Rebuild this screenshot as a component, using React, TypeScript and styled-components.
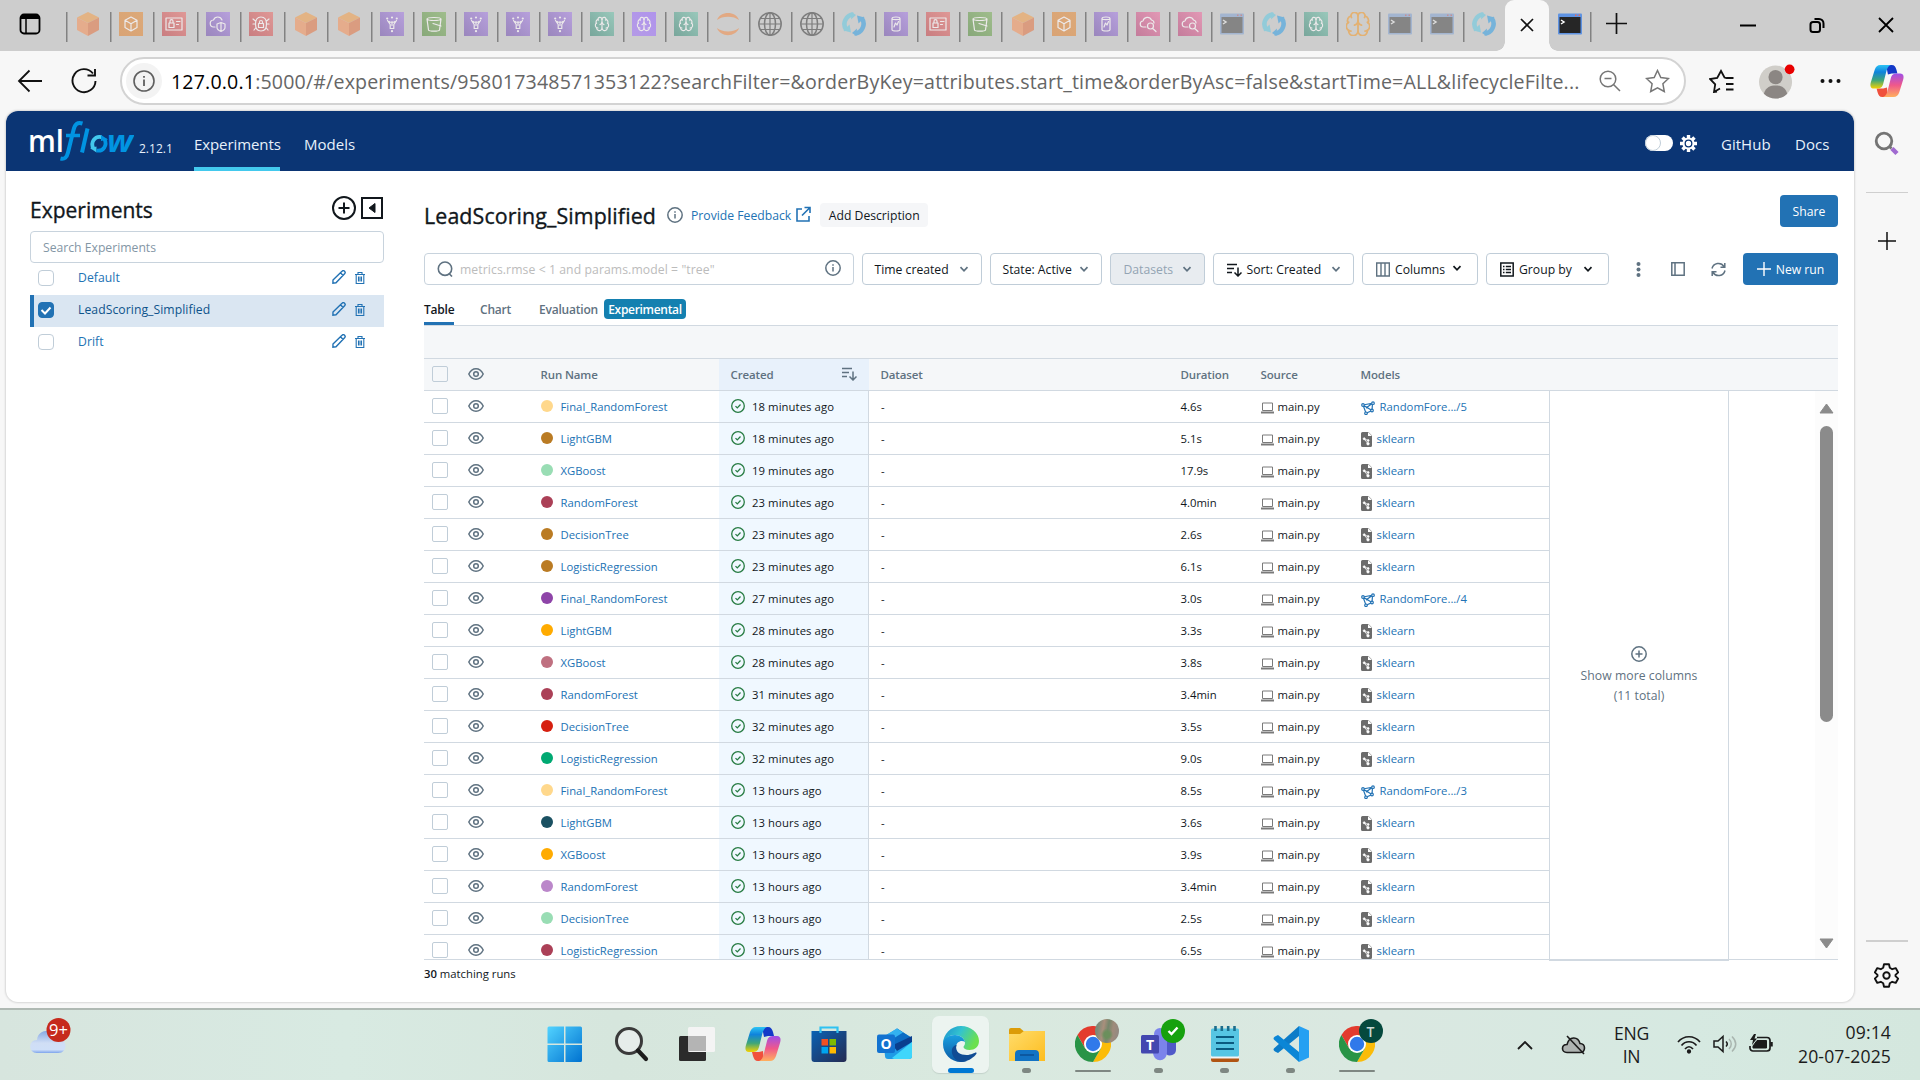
import React from "react";
import styled, { createGlobalStyle, css } from "styled-components";
import { Brain as BrainGlyph } from "lucide-react";

const Global = createGlobalStyle`
  *, *::before, *::after { box-sizing: border-box; }
  html, body { margin: 0; padding: 0; overflow: hidden; }
  body { font-family: "Open Sans", "Noto Sans", sans-serif; font-size: 12.2px; color: #11171c; }
`;

const LINE = "#d1d9e1";
const BLUE = "#2272b4";
const GREY = "#5f7281";

/* ---------- shell ---------- */
const Screen = styled.div`
  width: 1920px; height: 1080px; display: flex; flex-direction: column; overflow: hidden; background: #f7f7f7;
`;
const TabStrip = styled.div`
  height: 51px; flex: none; background: #cdcdcd; display: flex; align-items: stretch;
`;
const TabMenu = styled.div`
  width: 66px; display: flex; align-items: center; padding-left: 19px; padding-bottom: 3px;
`;
const BrowserTab = styled.div<{ $w: number; $line?: boolean }>`
  width: ${(p) => p.$w}px; flex: none; display: flex; align-items: flex-start; padding: 12px 0 0 9px;
  background: ${(p) => (p.$line === false ? "none" : "linear-gradient(#828282,#828282) 0 12px / 1.5px 30px no-repeat")};
`;
const ActiveTab = styled.div`
  width: 44px; flex: none; background: #f7f7f7; border-radius: 9px 9px 0 0; display: flex; justify-content: center; padding-top: 18px;
  position: relative;
  &::before, &::after { content: ""; position: absolute; bottom: 0; width: 9px; height: 9px; }
  &::before { left: -9px; background: radial-gradient(circle at 0 0, transparent 8.5px, #f7f7f7 9px); }
  &::after { right: -9px; background: radial-gradient(circle at 100% 0, transparent 8.5px, #f7f7f7 9px); }
`;
const WindowButtons = styled.div`
  margin-left: auto; display: flex; gap: 53px; padding: 17px 26px 0 0;
`;
const Toolbar = styled.div`
  height: 60px; flex: none; display: flex; align-items: center; background: #f7f7f7; padding-left: 17px;
`;
const ReloadWrap = styled.div`margin-left: 28px;`;
const UrlBar = styled.div`
  width: 1566px; height: 48px; margin-left: 23px; border: 2px solid #d3d3d3; border-radius: 24px; background: #fff;
  display: flex; align-items: center; padding: 0 14px 0 4px; flex: none;
`;
const SiteInfo = styled.div`
  width: 36px; height: 36px; border-radius: 50%; background: #f3f3f3; display: flex; align-items: center; justify-content: center;
`;
const Url = styled.div`
  margin-left: 9px; font-size: 19.6px; color: #666; white-space: nowrap; width: 1411px; letter-spacing: 0.165px; flex: none;
  b { font-weight: 400; color: #000; }
`;
const UrlActions = styled.div`margin-left: auto; display: flex; align-items: center; gap: 24px;`;
const ToolbarActions = styled.div`display: flex; align-items: center; padding-left: 23px;`;
const Avatar = styled.div`margin-left: 24px; width: 36px; height: 42px; display: flex; align-items: center;`;
const More = styled.div`margin-left: 25px; display: flex;`;
const Copilot = styled.div`margin-left: 29px; display: flex;`;

const Body = styled.div`flex: 1; display: flex; min-height: 0;`;
const Card = styled.div`
  width: 1848px; height: 891px; margin-left: 6px; flex: none; background: #fff; border-radius: 12px; overflow: hidden;
  box-shadow: 0 0 2px 1px rgba(0,0,0,0.13); display: flex; flex-direction: column;
`;
const EdgeBar = styled.div`
  flex: 1; display: flex; flex-direction: column; align-items: center; padding: 20px 1px 20px 0;
`;
const EdgeLine = styled.div<{ $mt: number }>`width: 42px; height: 1px; background: #cfcfcf; margin-top: ${(p) => p.$mt}px; margin-bottom: 39px;`;
const EdgeBottom = styled.div`
  margin-top: auto; width: 42px; border-top: 2px solid #cfcfcf; padding-top: 21px; display: flex; justify-content: center;
`;

/* ---------- mlflow header ---------- */
const Header = styled.div`
  height: 60px; flex: none; background: #0b3574; display: flex; align-items: stretch; color: #e7f1fb; font-size: 15px; padding: 0 24px 0 20px;
`;
const Version = styled.span`margin: 30px 0 0 5px; width: 31px; font-size: 12px; line-height: 16px; white-space: nowrap;`;
const NavLink = styled.a<{ $active?: boolean; $w: number }>`
  width: ${(p) => p.$w}px; margin-left: 24px; padding-top: 22px; line-height: 22px; white-space: nowrap;
  letter-spacing: ${(p) => (p.$active ? -0.08 : 0.02)}px;
  border-bottom: 4px solid ${(p) => (p.$active ? "#43c9ed" : "transparent")};
`;
const HeaderRight = styled.div`margin-left: auto; display: flex; align-items: stretch;`;
const Switch = styled.div`
  width: 28px; height: 16px; margin-top: 24px; border-radius: 8px; background: #fff; display: flex;
  &::before { content: ""; width: 16px; height: 16px; border-radius: 50%; border: 1px solid #c0cdd8; }
`;
const SunWrap = styled.div`margin: 24px 0 0 7px; height: 17px;`;

/* ---------- sidebar ---------- */
const Content = styled.div`flex: 1; display: flex; min-height: 0;`;
const Sidebar = styled.div`width: 378px; flex: none; padding: 25px 0 0 24px; display: flex; flex-direction: column;`;
const SideHead = styled.div`
  height: 35px; display: flex; gap: 5px; align-items: flex-start; padding-right: 1px;
  h1 { margin: -1px auto 0 0; font-size: 21px; line-height: 30px; font-weight: 500; -webkit-text-stroke: .35px #11171c; letter-spacing: 0; }
`;
const SearchExp = styled.div`
  height: 32px; border: 1px solid #c8d3dd; border-radius: 4px; color: #8396a5; padding: 0 12px; line-height: 31px;
`;
const ExpRow = styled.div<{ $on?: boolean }>`
  height: 32px; display: flex; align-items: center; padding-right: 19px; padding-bottom: 2px; letter-spacing: .06px; color: ${(p) => (p.$on ? "#0e538b" : BLUE)};
  ${(p) => (p.$on ? css`background: #dae6f2; border-left: 4px solid ${BLUE}; padding-left: 4px;` : css`padding-left: 8px;`)}
  span { margin: -1px auto 0 24px; }
  > svg { margin-top: -3px; }
  > svg + svg { margin: 0 0 0 9px; }
`;
const Box = styled.i<{ $on?: boolean; $sharp?: boolean }>`
  width: 16px; height: 16px; flex: none; border-radius: ${(p) => (p.$sharp ? 2 : 4)}px;
  border: 1px solid ${(p) => (p.$on ? BLUE : "#c0cdd8")}; background: ${(p) => (p.$on ? BLUE : "transparent")};
  display: flex; align-items: center; justify-content: center;
`;

/* ---------- main ---------- */
const Main = styled.div`width: 1414px; margin-left: 40px; display: flex; flex-direction: column;`;
const TitleRow = styled.div`
  height: 82px; padding-top: 24px; display: flex; align-items: flex-start;
  h2 { margin: 0; width: 231px; font-size: 21.4px; line-height: 42px; font-weight: 500; -webkit-text-stroke: .35px #11171c; white-space: nowrap; letter-spacing: 0.1px; }
`;
const InfoSlot = styled.span`margin: 12px 0 0 12px; height: 16px;`;
const Feedback = styled.a`margin: 12px 0 0 8px; color: ${BLUE}; display: flex; gap: 5px; line-height: 18px; font-size: 12.2px; white-space: nowrap; svg { margin-top: -1px; }`;
const AddDesc = styled.span`margin: 8px 0 0 9px; width: 108px; height: 24px; border-radius: 4px; background: #f5f6f8; line-height: 25px; text-align: center; white-space: nowrap;`;
const Primary = styled.button<{ $w: number }>`
  width: ${(p) => p.$w}px; height: 32px; border: 0; border-radius: 4px; background: ${BLUE}; color: #fff; font: inherit; font-weight: 500;
  display: flex; align-items: center; justify-content: center; gap: 5px; padding: 0; white-space: nowrap;
`;
const Push = styled.div`margin-left: auto;`;
const Filters = styled.div`height: 32px; display: flex; gap: 8px;`;
const RunSearch = styled.div`
  width: 430px; border: 1px solid #c8d3dd; border-radius: 4px; display: flex; align-items: center; padding: 0 12px; color: #bcbcbc;
  span { margin: 0 auto 0 7px; letter-spacing: .09px; }
  span + svg { margin-top: -2px; }
`;
const Select = styled.div<{ $w: number; $off?: boolean; $pl?: number }>`
  width: ${(p) => p.$w}px; height: 32px; border: 1px solid #c0cdd8; border-radius: 4px; display: flex; align-items: center;
  justify-content: space-between; padding: 0 12px 0 ${(p) => p.$pl ?? 11.5}px; white-space: nowrap;
  background: ${(p) => (p.$off ? "#e8ecf0" : "#fff")}; color: ${(p) => (p.$off ? "#93a4b3" : "#11171c")};
  span { display: flex; align-items: center; gap: 5px; margin-top: 1px; }
`;
const ColumnsSelect = styled(Select)`padding-right: 15px; > svg { margin-top: -1px; }`;
const GroupSelect = styled(Select)`padding-right: 15px;`;
const KebabSlot = styled.div`margin-left: auto; display: flex; align-items: center; padding-right: 22px;`;
const Tools = styled.div`display: flex; align-items: center; gap: 26px; padding-right: 9px;`;
const TabRow = styled.div`
  margin-top: 8px; height: 33px; border-bottom: 1px solid ${LINE}; display: flex; font-weight: 600; color: ${GREY}; font-size: 12px;
`;
const ViewTab = styled.div<{ $on?: boolean; $w: number }>`
  width: ${(p) => p.$w}px; margin-right: 26px; height: 32px; line-height: 33px; white-space: nowrap; letter-spacing: -.2px;
  color: ${(p) => (p.$on ? "#11171c" : GREY)}; border-bottom: 3px solid ${(p) => (p.$on ? BLUE : "transparent")};
`;
const Badge = styled.span`
  margin: 6px 0 0 -22px; height: 20px; width: 82px; border-radius: 4px; background: #1480b0; color: #fff; line-height: 21px; text-align: center; letter-spacing: -.3px;
`;
const GroupHead = styled.div`height: 33px; flex: none; background: #f5f7f9; border-bottom: 1px solid ${LINE};`;
const rowGrid = css`display: grid; grid-template-columns: 44px 62px 189px 150px 301px 80px 100px 199px; width: 1125px;`;
const HeadWrap = styled.div`height: 32px; flex: none; background: #f5f7f9; border-bottom: 1px solid ${LINE};`;
const HeadRow = styled.div`${rowGrid} height: 31px; color: ${GREY}; font-weight: 600; font-size: 11.5px; letter-spacing: -.13px;`;
const TableBody = styled.div`height: 569px; flex: none; display: flex; border-bottom: 1px solid ${LINE};`;
const Rows = styled.div`height: 568px; overflow: hidden;`;
const Row = styled.div`${rowGrid} height: 32px; border-bottom: 1px solid ${LINE}; font-size: 11.3px;`;
const Cell = styled.div<{ $pl?: number; $tint?: string; $edge?: boolean; $gap?: number; $link?: boolean; $drop?: number; $ls?: number }>`
  display: flex; align-items: center; padding: 0 12px 1px ${(p) => p.$pl ?? 10.5}px; gap: ${(p) => p.$gap ?? 8}px; white-space: nowrap;
  background: ${(p) => p.$tint ?? "transparent"}; color: ${(p) => (p.$link ? BLUE : "inherit")};
  ${(p) => p.$ls !== undefined && css`letter-spacing: ${p.$ls}px;`}
  ${(p) => p.$edge && css`border-right: 1px solid ${LINE};`}
  > svg { margin-top: ${(p) => p.$drop ?? 0}px; }
`;
const Dot = styled.i<{ $c: string }>`width: 12px; height: 12px; border-radius: 50%; background: ${(p) => p.$c}; margin-top: -1px;`;
const MoreCols = styled.div`
  width: 180px; height: 570px; border: solid ${LINE}; border-width: 0 1px 1px; color: ${GREY}; display: flex; flex-direction: column; align-items: center;
  justify-content: center; font-size: 12.2px; line-height: 20px; text-align: center; letter-spacing: .05px;
  padding-top: 1px;
  svg { margin-bottom: 4px; margin-top: -1px; }
`;
const Scroll = styled.div`
  margin-left: auto; width: 23px; height: 568px; background: #fcfcfc; display: flex; flex-direction: column; align-items: center; padding: 12px 0 10px;
`;
const Thumb = styled.div`width: 13px; height: 296px; margin: 12px 0 auto; border-radius: 7px; background: #8b8b8b;`;
const Footer = styled.div`padding-top: 5px; line-height: 18px; font-size: 11.3px; b { font-weight: 600; }`;

/* ---------- taskbar ---------- */
const Taskbar = styled.div`
  height: 72px; flex: none; border-top: 2px solid #afb9b3; display: flex; align-items: stretch;
  background: linear-gradient(90deg, #d7e5de, #d8eae2 18%, #d6e6dd 32%, #d9e9df 50%, #dae8e1 72%, #d6e9e1 88%, #d4e7de);
`;
const Weather = styled.div`width: 531.5px; padding: 8px 0 0 30px;`;
const Apps = styled.div`display: flex;`;
const AppSlot = styled.div`
  width: 66px; display: flex; flex-direction: column; align-items: center; padding-top: 6px;
`;
const AppTile = styled.div<{ $on?: boolean }>`
  width: 57px; height: 57px; border-radius: 7px; display: flex; align-items: center; flex-direction: column; padding-top: 10px;
  ${(p) => p.$on && css`background: #ecf4f0; box-shadow: 0 1px 1px 0 #c3d2ca;`}
`;
const Mark = styled.i<{ $kind: "active" | "dot" | "line" }>`
  margin-top: auto; flex: none; border-radius: 3px;
  ${(p) => p.$kind === "active" && css`width: 26px; height: 5px; background: #0078d4;`}
  ${(p) => p.$kind === "dot" && css`width: 9px; height: 5px; background: #7e8782;`}
  ${(p) => p.$kind === "line" && css`width: 36px; height: 2px; margin-bottom: 1px; background: #7e8782;`}
`;
const Tray = styled.div`margin-left: auto; padding-right: 29px; display: flex; align-items: center; font-size: 17.6px; line-height: 23px; color: #1b1b1b;`;
const CloudWrap = styled.div`margin-left: 28px; margin-top: -1px;`;
const Lang = styled.div`margin-left: 26px; width: 37px; text-align: center; margin-right: 27px; letter-spacing: -.3px; padding-bottom: 1px;`;
const Clock = styled.div`text-align: right; width: 118px; line-height: 24px; letter-spacing: .12px; padding-bottom: 3px;`;
const TrayIcons = styled.div`display: flex; gap: 12px; margin-top: -2px;`;

/* ---------- browser tab icons ---------- */
const Glyphs: Record<string, React.ReactNode> = {
  box: <path d="M12 5l6 3.3v7.2L12 19l-6-3.5V8.3zM6 8.3l6 3.4 6-3.4M12 11.7V19" />,
  id: <path d="M4 6h16v12H4zM7 11h5v4.500H7zM8 11V9.200a1.500 1.500 0 013 0V11M14.500 9.500h3.500M14.500 12.500h2" />,
  shield: <path d="M9 15H8a3.500 3.500 0 01-.500-7A4.500 4.500 0 0116 8M11 12l4-1.500 4 1.500v3.500c0 2-1.500 3-4 4-2.500-1-4-2-4-4zM15 10.500v9" />,
  bug: <path d="M12 5c4 0 5.500 3 5.500 7s-1.500 7-5.500 7-5.500-3-5.500-7S8 5 12 5M9.500 11.500h5v4h-5zM10.500 11.500V10a1.500 1.500 0 013 0v1.500M6.500 9L4 7M6.500 12H4M7 15.500L5 18M17.500 9L20 7M17.500 12H20M17 15.500L19 18" />,
  funnel: <><path d="M7.500 8.500l2.700 4v4h3.600v-4l2.700-4M9 9.500c1.500 1 4.500 1 6 0M12 9.500v4" /><path d="M7.200 6.500h.01M12 5.500h.01M16.800 6.500h.01M12 19.200h.01" strokeWidth="2.200" /></>,
  bucket: <path d="M5 7c0-2 14-2 14 0l-1.500 11c-1 1.600-10 1.600-11 0zM5 7c1 2 13 2 14 0M11 11.500l8 2.500" />,
  brain: <BrainGlyph x={4} y={4} size={16} strokeWidth={1.7} stroke="#ece9ea" />,
  db: <path d="M8 6.500c0-2 8-2 8 0v11c0 2-8 2-8 0zM8 6.500c0 1.500 8 1.500 8 0M10 15l1.500-4 1.500 2 1.500-3.500" />,
  cloud: <path d="M10 15H7.500a3 3 0 01-.500-6 4.500 4.500 0 018.500-1 3 3 0 012.500 3M14.500 17a3 3 0 100-6 3 3 0 000 6M16.500 16.200L20 19.500" />,
};
const Tile = ({ c, g }: { c: string; g: string }) => {
  const tones: Record<string, [string, string]> = {
    orange: ["#d9a374", "#dca979"], red: ["#c97d80", "#df9896"], purple: ["#9a86bd", "#b7a0dc"], green: ["#87a879", "#9fbd8c"],
    teal: ["#78a69b", "#99c8bb"], violet: ["#b49ae6", "#b094ec"], pink: ["#c47c9b", "#e298b5"],
  };
  const [a, b] = tones[c];
  return (
    <svg width="24" height="24" viewBox="0 0 24 24">
      <defs><linearGradient id={`t-${c}`} x1="0" y1="1" x2="1" y2="0"><stop stopColor={a} /><stop offset="1" stopColor={b} /></linearGradient></defs>
      <rect width="24" height="24" fill={`url(#t-${c})`} />
      <g fill="none" stroke="#ece9ea" strokeWidth="1.200" strokeLinejoin="round" strokeLinecap="round">{Glyphs[g]}</g>
    </svg>
  );
};
const Hex = () => (
  <svg width="26" height="24" viewBox="0 0 26 24">
    <path d="M13 0l11 5.500L13 11 2 5.500z" fill="#e3b384" /><path d="M2 5.500L13 11v13L2 18z" fill="#e5ac8c" /><path d="M24 5.500L13 11v13l11-6z" fill="#da9c80" />
  </svg>
);
const Sync = () => (
  <svg width="24" height="24" viewBox="0 0 24 24" fill="none" strokeWidth="4.600">
    <path d="M11.500 2.500A9.600 9.600 0 004.500 18" stroke="#92cbd9" /><path d="M1.500 18.500l6-6 1.500 8z" fill="#92cbd9" />
    <path d="M9.500 0l4.500 3-5 4.500z" fill="#92cbd9" />
    <path d="M12.500 21.500A9.600 9.600 0 0019.500 6" stroke="#76b3da" /><path d="M22.500 5.500l-6 6-1.500-8z" fill="#76b3da" />
    <path d="M14.500 24L10 21l5-4.500z" fill="#76b3da" />
  </svg>
);
const Jupyter = () => (
  <svg width="24" height="24" viewBox="0 0 24 24" fill="#e2a983"><path d="M1 8C4-1.500 20-1.500 23 8 18 3.500 6 3.500 1 8zM1 16c3 9.500 19 9.500 22 0-5 4.500-17 4.500-22 0z" /></svg>
);
const Globe = () => (
  <svg width="24" height="24" viewBox="0 0 24 24" fill="none" stroke="#7d7d7d" strokeWidth="1.500">
    <circle cx="12" cy="12" r="11.200" /><ellipse cx="12" cy="12" rx="5.500" ry="11.200" /><path d="M12 1v22M1 12h22M2.500 6.500h19M2.500 17.500h19" strokeWidth="1.200" />
  </svg>
);
const OrangeBrain = () => (
  <svg width="24" height="24" viewBox="0 0 24 24" fill="none"><BrainGlyph x={-2} y={-2} size={28} strokeWidth={1.5} stroke="#e3b172" /></svg>
);
const Term = ({ dim }: { dim?: boolean }) => (
  <svg width="24" height="24" viewBox="0 0 24 24">
    <rect x="0" y="1.500" width="24" height="21" rx="1" fill={dim ? "#a3b5d0" : "#5f93e2"} />
    <rect x="1.500" y="5" width="21" height="16" fill={dim ? "#858585" : "#262626"} />
    <path d="M3 8l3 2-3 2" fill="none" stroke={dim ? "#dcdcdc" : "#fff"} strokeWidth="1.500" />
    <path d="M17 3.200h1.500M20.500 3.200H22" stroke="#e86a5a" strokeWidth="1.400" opacity={dim ? 0.5 : 1} />
  </svg>
);
const P = (g: string, c: string) => <Tile c={c} g={g} />;
const TABS: React.ReactNode[] = [
  <Hex />, P("box", "orange"), P("id", "red"), P("shield", "purple"), P("bug", "red"), <Hex />, <Hex />,
  P("funnel", "purple"), P("bucket", "green"), P("funnel", "purple"), P("funnel", "purple"), P("funnel", "purple"), P("brain", "teal"),
  P("brain", "violet"), P("brain", "teal"), <Jupyter />, <Globe />, <Globe />, <Sync />, P("db", "purple"), P("id", "red"), P("bucket", "green"),
  <Hex />, P("box", "orange"), P("db", "purple"), P("cloud", "pink"), P("cloud", "pink"), <Term dim />, <Sync />, P("brain", "teal"), <OrangeBrain />,
  <Term dim />, <Term dim />, <Sync />,
];

/* ---------- small icons ---------- */
const S = ({ w, h = w, sw = 1.5, c = "currentColor", children }: { w: number; h?: number; sw?: number; c?: string; children: React.ReactNode }) => (
  <svg width={w} height={h} viewBox={`0 0 ${w} ${h}`} fill="none" stroke={c} strokeWidth={sw} display="block">{children}</svg>
);
const Info = () => <S w={16} c={GREY} sw={1.5}><circle cx="8" cy="8" r="7.200" /><path d="M8 7v4.500M8 4.300v1.500" /></S>;
const Chev = ({ c = GREY }: { c?: string }) => <S w={10} h={7} c={c} sw={1.7}><path d="M1.500 1.200L5 4.800l3.500-3.600" /></S>;
const EyeIcon = () => <S w={16} c={GREY} sw={1.5}><path d="M.8 8C2.500 4.500 5 2.800 8 2.800s5.500 1.700 7.200 5.200c-1.700 3.500-4.200 5.200-7.200 5.200S2.500 11.500.8 8z" /><circle cx="8" cy="8" r="2.300" /></S>;
const Pencil = () => <S w={14} c={BLUE} sw={1.4}><path d="M1 10L10 1.200a1.600 1.600 0 012.600 2.500L4 12.800.9 13.200zM8.500 2.800l2.600 2.600" /></S>;
const Trash = () => <S w={10} h={12} c={BLUE} sw={1.1}><path d="M0 2.500h10M3 2.500v-2h4v2M1.200 2.500v9h7.600v-9M3.500 4.500v5M5 4.500v5M6.500 4.500v5" /></S>;
const CheckCircle = () => <S w={14} c="#277c43" sw={1.3}><circle cx="7" cy="7" r="6.300" /><path d="M4.500 7.100l1.800 1.800 3.200-3.400" /></S>;
const Laptop = () => <S w={13} h={12} c="#7a7a7a" sw={1}><path d="M1.500 1h10v7.500h-10z" /><path d="M0 10.500h13" strokeWidth="2" /></S>;
const ModelFile = () => (
  <svg width="11" height="15" viewBox="0 0 11 15"><path d="M1.500 0h6L11 3.500v10a1.500 1.500 0 01-1.500 1.500h-8A1.500 1.500 0 010 13.500v-12A1.500 1.500 0 011.500 0z" fill="#6b6b6b" /><path d="M7 0v4h4" fill="#fff" /><g fill="#fff" stroke="#fff" strokeWidth=".8"><circle cx="3.200" cy="6.800" r="1" /><circle cx="7.200" cy="8.500" r=".9" /><circle cx="7" cy="11.800" r="1.200" /><path d="M3.200 6.800l4 1.700M3.200 6.800l3.800 5" /></g></svg>
);
const ModelReg = () => (
  <S w={14} c={BLUE} sw={1.2}><path d="M2 4l9.500-1.800-.5 7.300-6 2.800zM2 4l9 5.500M5 7l6.500-4.800" /><g fill="#fff"><circle cx="2" cy="4" r="1.300" /><circle cx="12" cy="2.200" r="1.300" /><circle cx="11" cy="9.500" r="1.300" /><circle cx="5" cy="12.300" r="1.300" /></g></S>
);
const SortIcon = ({ c = "#11171c" }: { c?: string }) => <S w={15} h={14} c={c} sw={1.5}><path d="M0 1.500h10M0 5.500h7M0 9.500h5M11 4.500V13M7.500 9.500L11 13l3.500-3.500" /></S>;

const CopilotLogo = ({ s }: { s: number }) => (
  <svg width={s} height={s} viewBox="0 0 36 36">
    <defs>
      <linearGradient id="cpA" x1="0" y1="0" x2="0" y2="1"><stop stopColor="#2cc4f5" /><stop offset=".3" stopColor="#0f83dc" /><stop offset=".65" stopColor="#3fa679" /><stop offset="1" stopColor="#f6d200" /></linearGradient>
      <linearGradient id="cpB" x1="0" y1="0" x2="0" y2="1"><stop stopColor="#9f4fe8" /><stop offset=".5" stopColor="#f0588a" /><stop offset="1" stopColor="#ffb05e" /></linearGradient>
    </defs>
    <path d="M17 1h6c3 0 4 2 5 5l1 4h-6l-4 1z" fill="#1439c8" />
    <path d="M19 35h-6c-3 0-4-2-5-5l-1-4h7l4-1z" fill="#f0503c" />
    <path d="M11 1h11c-3 1-4 4-5 8l-3 12c-1 4-3 5-7 5H4c-4 0-4-4-3-7L5 6c1-3 3-5 6-5z" fill="url(#cpA)" />
    <path d="M25 35H14c3-1 4-4 5-8l3-12c1-4 3-5 7-5h3c4 0 4 4 3 7l-4 13c-1 3-3 5-6 5z" fill="url(#cpB)" />
  </svg>
);
const Chrome = () => (
  <svg width="36" height="36" viewBox="0 0 36 36">
    <path d="M18 9h15.600A18 18 0 0118 36l7.800-13.500z" fill="#fbbc09" /><path d="M2.400 9A18 18 0 0133.600 9H18l-7.800 13.500z" fill="#e33b2e" /><path d="M2.400 9A18 18 0 0018 36l7.800-13.500H10.200z" fill="#299447" />
    <circle cx="18" cy="18" r="9" fill="#fff" /><circle cx="18" cy="18" r="7.200" fill="#3079ea" />
  </svg>
);
const BadgeWrap = styled.div`
  position: relative; width: 36px; height: 36px;
  > i { position: absolute; left: 20px; top: -7px; width: 24px; height: 24px; border-radius: 50%; font-style: normal; display: flex; align-items: center; justify-content: center; overflow: hidden; font-size: 14px; }
`;
const PhotoBadge = styled.i`
  background: radial-gradient(circle at 50% 65%, #6b8f5c 0 15%, transparent 32%), linear-gradient(100deg, #7c8a78 15%, #a98f7c 35%, #75866b 52%, #a08b7b 70%, #8d8884);
`;
const GreenBadge = styled.i`background: #16a10e;`;
const TBadge = styled.i`background: #05493d; color: #c8d8d4; font-weight: 600;`;

const Edge = () => (
  <svg width="36" height="36" viewBox="0 0 36 36">
    <defs>
      <linearGradient id="eA" x1="0" y1="0" x2="1" y2=".4"><stop stopColor="#1a8fd0" /><stop offset=".5" stopColor="#33c3cf" /><stop offset="1" stopColor="#6be04e" /></linearGradient>
      <linearGradient id="eB" x1="0" y1="0" x2="0" y2="1"><stop stopColor="#1aa0e0" /><stop offset="1" stopColor="#0c59a4" /></linearGradient>
    </defs>
    <path d="M0 18C0 8 8 0 18 0s18 7 18 15c0 6-4.500 9-9.500 9-4 0-6-1.500-6-3 0-1 1.500-1.500 1.500-4C22 13 18 9 12 9 5 9 1 14 0 18z" fill="url(#eA)" />
    <path d="M0 18c0-5 5-9 12-9 5 0 9 3 10 7-3-2-9-1-9 6 0 6 5 11 11 13-2 .7-4 1-6 1C8 36 0 28 0 18z" fill="url(#eB)" />
    <path d="M13.500 19c-2 7 4 10 10 10 5 0 8-2.500 9.500-2.500 1 0 .8 1-.5 2.500C30 32 24 36 18 36c-8-2-10-9-9-13 .5-2 3-4 4.500-4z" fill="#114c94" />
  </svg>
);

const ROWS: [string, string, string, string, string][] = [
  ["#ffd88c", "Final_RandomForest", "18 minutes ago", "4.6s", "RandomFore.../5"],
  ["#ba7b23", "LightGBM", "18 minutes ago", "5.1s", ""],
  ["#99ddb4", "XGBoost", "19 minutes ago", "17.9s", ""],
  ["#ab4057", "RandomForest", "23 minutes ago", "4.0min", ""],
  ["#ba7b23", "DecisionTree", "23 minutes ago", "2.6s", ""],
  ["#ba7b23", "LogisticRegression", "23 minutes ago", "6.1s", ""],
  ["#8e44a8", "Final_RandomForest", "27 minutes ago", "3.0s", "RandomFore.../4"],
  ["#ffab00", "LightGBM", "28 minutes ago", "3.3s", ""],
  ["#bf7080", "XGBoost", "28 minutes ago", "3.8s", ""],
  ["#ab4057", "RandomForest", "31 minutes ago", "3.4min", ""],
  ["#d62010", "DecisionTree", "32 minutes ago", "3.5s", ""],
  ["#00a972", "LogisticRegression", "32 minutes ago", "9.0s", ""],
  ["#ffd88c", "Final_RandomForest", "13 hours ago", "8.5s", "RandomFore.../3"],
  ["#1b5162", "LightGBM", "13 hours ago", "3.6s", ""],
  ["#ffab00", "XGBoost", "13 hours ago", "3.9s", ""],
  ["#bb87ca", "RandomForest", "13 hours ago", "3.4min", ""],
  ["#99ddb4", "DecisionTree", "13 hours ago", "2.5s", ""],
  ["#ab4057", "LogisticRegression", "13 hours ago", "6.5s", ""],
];

const Logo = () => (
  <svg width="108" height="60" viewBox="-4 0 108 60" display="block">
    <g fontFamily="Open Sans, sans-serif">
      <text x="-2" y="41" fontSize="31" fontWeight="600" fill="#fff" textLength="36" lengthAdjust="spacingAndGlyphs">ml</text>
      <path d="M52.500 12.500c-5-1.500-7.500.5-9 6.500l-5.500 22.500c-1.200 5-3.500 7-7.500 6" fill="none" stroke="#0194e2" strokeWidth="4" />
      <path d="M36 24.500h14" stroke="#0194e2" strokeWidth="3.500" />
      <path d="M57.500 17.500l-5.500 24" stroke="#0194e2" strokeWidth="4" />
      <text x="77" y="41" fontSize="31" fontWeight="700" fontStyle="italic" fill="#0194e2" textLength="26" lengthAdjust="spacingAndGlyphs">w</text>
    </g>
    <path d="M71.500 26.200c-6.500-1.700-11.500 5-8 11.500" fill="none" stroke="#43c9ed" strokeWidth="3.800" /><path d="M60 37l6.500-1.500v6z" fill="#43c9ed" />
    <path d="M66.500 39.500c7 1.200 11-5 8-11.500" fill="none" stroke="#0194e2" strokeWidth="3.800" /><path d="M78 28.500l-7 1.500v-6z" fill="#0194e2" />
  </svg>
);

const TaskItem = ({ children, on, mark }: { children: React.ReactNode; on?: boolean; mark?: "active" | "dot" | "line" }) => (
  <AppSlot><AppTile $on={on}>{children}{mark && <Mark $kind={mark} />}</AppTile></AppSlot>
);

export default function App() {
  return (
    <Screen>
      <Global />
      <TabStrip>
        <TabMenu>
          <S w={22} c="#000" sw={1.8}><rect x="1.500" y="1.500" width="19" height="19" rx="3.500" /><path d="M2 4h18" strokeWidth="4" /><path d="M7 6v14.500" strokeWidth="1.500" /></S>
        </TabMenu>
        {TABS.map((t, i) => <BrowserTab key={i} $w={i < 7 ? 43.5 : 42}>{t}</BrowserTab>)}
        <ActiveTab><S w={14} c="#111" sw={1.7}><path d="M1 1l12 12M13 1L1 13" /></S></ActiveTab>
        <BrowserTab $w={41} $line={false}><Term /></BrowserTab>
        <BrowserTab $w={40}><S w={31} h={24} c="#111" sw={1.7}><path d="M17.500 1v21M7 11.500h21" /></S></BrowserTab>
        <WindowButtons>
          <S w={16} c="#000" sw={2}><path d="M0 8.500h16" /></S>
          <S w={16} c="#000" sw={2}><rect x="1.500" y="5" width="9.500" height="10" rx="2.500" /><path d="M5.500 2h4.500a4.500 4.500 0 014.500 4.500V11" /></S>
          <S w={16} c="#000" sw={1.8}><path d="M1 1l14 14M15 1L1 15" /></S>
        </WindowButtons>
      </TabStrip>
      <Toolbar>
        <S w={26} h={24} c="#111" sw={1.8}><path d="M25 12H2M12.500 1.500L2 12l10.500 10.500" /></S>
        <ReloadWrap><S w={26} c="#111" sw={1.9}><path d="M22 5.500A11.500 11.500 0 1024.500 13M24 1v6.500h-7.500" /></S></ReloadWrap>
        <UrlBar>
          <SiteInfo><S w={22} c="#5f5f5f" sw={1.6}><circle cx="11" cy="11" r="10" /><path d="M11 9.500v6.500M11 6v1.800" strokeWidth="1.800" /></S></SiteInfo>
          <Url><b>127.0.0.1</b>:5000/#/experiments/958017348571353122?searchFilter=&amp;orderByKey=attributes.start_time&amp;orderByAsc=false&amp;startTime=ALL&amp;lifecycleFilte...</Url>
          <UrlActions>
            <S w={22} c="#767676" sw={1.5}><circle cx="9" cy="9" r="7.800" /><path d="M5.500 8.500h7M14.500 14.500l6.500 6.500" /></S>
            <S w={25} h={24} c="#767676" sw={1.5}><path d="M12.500 1.500l3.300 7 7.700 1-5.600 5.300 1.400 7.700-6.800-3.700-6.800 3.700 1.400-7.700L1.500 9.500l7.700-1z" /></S>
          </UrlActions>
        </UrlBar>
        <ToolbarActions>
          <S w={26} h={24} c="#111" sw={1.8}><path d="M8 22.500l-3 .5 1.200-7.700L1 10l7.200-1L12 2l3.500 6.500 2 .5h7M17 15h7.500M17 20.500h7.500M5 23l6-3.500" /></S>
          <Avatar>
            <svg width="37" height="42" viewBox="0 0 37 42"><circle cx="17" cy="22" r="17" fill="#d0cec9" /><circle cx="17" cy="17" r="7.300" fill="#8b8683" /><path d="M5 34c2-7 7-8.500 12-8.500S27 27 29 34A17 17 0 015 34z" fill="#8b8683" /><circle cx="31.500" cy="9" r="5" fill="#e80000" /></svg>
          </Avatar>
          <More><svg width="21" height="6"><g fill="#111"><circle cx="2.500" cy="3" r="2" /><circle cx="10.500" cy="3" r="2" /><circle cx="18.500" cy="3" r="2" /></g></svg></More>
          <Copilot><CopilotLogo s={34} /></Copilot>
        </ToolbarActions>
      </Toolbar>
      <Body>
        <Card>
          <Header>
            <Logo />
            <Version>2.12.1</Version>
            <NavLink $active $w={86}>Experiments</NavLink>
            <NavLink $w={60}>Models</NavLink>
            <HeaderRight>
              <Switch />
              <SunWrap>
                <svg width="17" height="17" viewBox="0 0 17 17"><g stroke="#fff" strokeWidth="3.400"><path d="M8.500 0v17M0 8.500h17M2.500 2.500l12 12M14.500 2.500l-12 12" /></g><circle cx="8.500" cy="8.500" r="6" fill="#fff" /><circle cx="8.500" cy="8.500" r="3.300" fill="#fff" stroke="#0b3574" strokeWidth="1.300" /></svg>
              </SunWrap>
              <NavLink $w={50}>GitHub</NavLink>
              <NavLink $w={35}>Docs</NavLink>
            </HeaderRight>
          </Header>
          <Content>
            <Sidebar>
              <SideHead>
                <h1>Experiments</h1>
                <S w={24} c="#11171c" sw={2}><circle cx="12" cy="12" r="11" /><path d="M12 6.500v11M6.500 12h11" /></S>
                <S w={22} h={24} c="#11171c" sw={2}><rect x="1" y="2" width="20" height="20" /><path d="M14 7.500v9L8 12z" fill="#11171c" strokeWidth="1" /></S>
              </SideHead>
              <SearchExp>Search Experiments</SearchExp>
              {["Default", "LeadScoring_Simplified", "Drift"].map((n, i) => (
                <ExpRow key={n} $on={i === 1}>
                  <Box $on={i === 1}>{i === 1 && <S w={12} h={10} c="#fff" sw={2}><path d="M1.500 5L5 8.500l5.500-6" /></S>}</Box>
                  <span>{n}</span><Pencil /><Trash />
                </ExpRow>
              ))}
            </Sidebar>
            <Main>
              <TitleRow>
                <h2>LeadScoring_Simplified</h2>
                <InfoSlot><Info /></InfoSlot>
                <Feedback>Provide Feedback <S w={15} h={16} c={BLUE} sw={1.6}><path d="M6 3H1v12h12v-5M8.500 1.500h5.500V7M14 1.500L6 9.500" /></S></Feedback>
                <AddDesc>Add Description</AddDesc>
                <Push><Primary $w={58}>Share</Primary></Push>
              </TitleRow>
              <Filters>
                <RunSearch>
                  <S w={16} c={GREY} sw={1.6}><circle cx="8" cy="7.700" r="6.700" /><path d="M12 12.500l3 3" /></S>
                  <span>metrics.rmse &lt; 1 and params.model = "tree"</span><Info />
                </RunSearch>
                <Select $w={120}><span>Time created</span><Chev /></Select>
                <Select $w={112}><span>State: Active</span><Chev /></Select>
                <Select $w={95} $off $pl={12.5}><span>Datasets</span><Chev /></Select>
                <Select $w={141} $pl={12.5}><span><SortIcon />Sort: Created</span><Chev /></Select>
                <ColumnsSelect $w={116} $pl={13}><span><S w={14} h={15} c={GREY} sw={1.4}><path d="M.7 1h12.600v13H.7zM5 1v13M9 1v13" /></S>Columns</span><Chev c="#11171c" /></ColumnsSelect>
                <GroupSelect $w={123} $pl={13}><span><S w={14} h={15} c="#11171c" sw={1.5}><path d="M.8 1h12.400v13H.8zM3 4.500h1.500M3 7.500h1.500M3 10.500h1.500M5.800 4.500H11M5.800 7.500H11M5.800 10.500H11" /></S>Group by</span><Chev c="#11171c" /></GroupSelect>
                <KebabSlot>
                  <svg width="5" height="16"><g fill={GREY}><circle cx="2.500" cy="3" r="2" /><circle cx="2.500" cy="8.500" r="2" /><circle cx="2.500" cy="14" r="2" /></g></svg>
                </KebabSlot>
                <Tools>
                  <S w={14} c={GREY} sw={1.5}><path d="M.8.8h12.400v12.400H.8zM4 .8v12.400" /></S>
                  <S w={15} c={GREY} sw={1.5}><path d="M1 6.500A6.600 6.600 0 0113 4.500M14 8.500A6.600 6.600 0 012 10.500M13.800 1v4.200H9.500M1.200 14V9.800h4.300" /></S>
                </Tools>
                <Primary $w={95}><S w={14} c="#fff" sw={1.4}><path d="M7 0v14M0 7h14" /></S>New run</Primary>
              </Filters>
              <TabRow>
                <ViewTab $on $w={30}>Table</ViewTab>
                <ViewTab $w={33}>Chart</ViewTab>
                <ViewTab $w={61}>Evaluation</ViewTab>
                <Badge>Experimental</Badge>
              </TabRow>
              <GroupHead />
              <HeadWrap>
                <HeadRow>
                  <Cell $pl={8}><Box $sharp /></Cell>
                  <Cell $pl={0}><EyeIcon /></Cell>
                  <Cell>Run Name</Cell>
                  <Cell $pl={11.5} $tint="#e8f1fb">Created<Push><SortIcon c={GREY} /></Push></Cell>
                  <Cell $pl={11.5}>Dataset</Cell><Cell>Duration</Cell><Cell>Source</Cell><Cell>Models</Cell>
                </HeadRow>
              </HeadWrap>
              <TableBody>
                <Rows>
                  {ROWS.map(([c, n, t, d, m], i) => (
                    <Row key={i}>
                      <Cell $pl={8}><Box $sharp /></Cell>
                      <Cell $pl={0}><EyeIcon /></Cell>
                      <Cell $link><Dot $c={c} />{n}</Cell>
                      <Cell $pl={12} $tint="#f0f8ff" $edge $gap={7} $ls={0.08}><CheckCircle />{t}</Cell>
                      <Cell $pl={12}>-</Cell>
                      <Cell>{d}</Cell>
                      <Cell $gap={4} $drop={4}><Laptop />main.py</Cell>
                      <Cell $gap={5} $link $drop={3}>{m ? <ModelReg /> : <ModelFile />}{m || "sklearn"}</Cell>
                    </Row>
                  ))}
                </Rows>
                <MoreCols>
                  <S w={16} c={GREY} sw={1.5}><circle cx="8" cy="8" r="7.200" /><path d="M8 4.500v7M4.500 8h7" /></S>
                  Show more columns<br />(11 total)
                </MoreCols>
                <Scroll>
                  <svg width="15" height="11"><path d="M7.500 1L14 10H1z" fill="#8b8b8b" stroke="#8b8b8b" strokeLinejoin="round" /></svg>
                  <Thumb />
                  <svg width="15" height="11"><path d="M7.500 10L14 1H1z" fill="#8b8b8b" stroke="#8b8b8b" strokeLinejoin="round" /></svg>
                </Scroll>
              </TableBody>
              <Footer><b>30</b> matching runs</Footer>
            </Main>
          </Content>
        </Card>
        <EdgeBar>
          <S w={25} c="#747474" sw={2.8}><circle cx="10" cy="10" r="7.800" /><path d="M15.500 15.500l2 2" /><path d="M18 17.500l5 5" stroke="#a06ad0" strokeWidth="4.500" /></S>
          <EdgeLine $mt={36} />
          <S w={18} c="#111" sw={1.5}><path d="M9 0v18M0 9h18" /></S>
          <EdgeBottom>
            <S w={25} c="#111" sw={1.9}><circle cx="12.500" cy="12.500" r="3.200" /><path d="M10 1.200h5l.8 3.600 2.400 1.400 3.500-1.100 2.500 4.300-2.700 2.500v1.200l2.700 2.500-2.500 4.300-3.500-1.100-2.400 1.400-.8 3.600h-5l-.8-3.600-2.400-1.400-3.500 1.100L.8 15.600l2.700-2.500v-1.200L.8 9.400l2.500-4.300 3.500 1.100 2.400-1.400z" strokeLinejoin="round" /></S>
          </EdgeBottom>
        </EdgeBar>
      </Body>
      <Taskbar>
        <Weather>
          <svg width="46" height="40" viewBox="0 0 46 40">
            <defs><linearGradient id="wc" x1="0" y1="0" x2="0" y2="1"><stop stopColor="#86a9e4" /><stop offset=".55" stopColor="#d0def5" /><stop offset=".85" stopColor="#cfdff8" /><stop offset="1" stopColor="#7da4ec" /></linearGradient></defs>
            <path d="M7 35C-2 35-2 22 7 22c1-12 19-12 21-1 10 0 10 14 0 14z" fill="url(#wc)" />
            <circle cx="28.500" cy="12" r="12" fill="#c62a1c" />
            <text x="28.500" y="18" fontFamily="Open Sans" fontSize="16.500" fill="#fff" textAnchor="middle">9+</text>
          </svg>
        </Weather>
        <Apps>
          <TaskItem>
            <svg width="36" height="36" viewBox="0 0 36 36"><defs><linearGradient id="win" x1="0" y1="0" x2="1" y2="1"><stop stopColor="#52d3ff" /><stop offset="1" stopColor="#0072d0" /></linearGradient></defs><path d="M2 .5h15v17H.5V2A1.500 1.500 0 012 .5zM18.500.5h15A1.500 1.500 0 0135 2v15.500H18.500zM.5 19H17v17H2a1.500 1.500 0 01-1.500-1.500zM18.500 19H35v15.500a1.500 1.500 0 01-1.500 1.500h-15z" fill="url(#win)" /></svg>
          </TaskItem>
          <TaskItem><svg width="36" height="36" viewBox="0 0 36 36"><circle cx="16" cy="15" r="12.500" fill="#e6ecea" stroke="#3a3a3a" strokeWidth="3" /><path d="M25 24.500l8 8.500" stroke="#1c1c1c" strokeWidth="4.200" strokeLinecap="round" /></svg></TaskItem>
          <TaskItem><svg width="36" height="36" viewBox="0 0 36 36"><rect x="0" y="10" width="27" height="25" rx="1.500" fill="#2b2b2b" /><rect x="9" y="1" width="27" height="25" rx="1.500" fill="#f4f4f4" /><path d="M9 10h18v15H9z" fill="#b4b4b4" /></svg></TaskItem>
          <TaskItem><CopilotLogo s={36} /></TaskItem>
          <TaskItem><svg width="36" height="36" viewBox="0 0 36 36"><defs><linearGradient id="st" x1="0" y1="0" x2="1" y2="1"><stop stopColor="#0a62b4" /><stop offset="1" stopColor="#252b52" /></linearGradient></defs><path d="M.5 5h35v28a3 3 0 01-3 3h-29a3 3 0 01-3-3z" fill="url(#st)" /><path d="M9.500 7V1.500h17V7" fill="none" stroke="#2fc2f2" strokeWidth="2.200" /><path d="M10.500 13H17v6.500h-6.500z" fill="#f25022" /><path d="M18.500 13H25v6.500h-6.500z" fill="#7fba00" /><path d="M10.500 21H17v6.500h-6.500z" fill="#00a4ef" /><path d="M18.500 21H25v6.500h-6.500z" fill="#ffb900" /></svg></TaskItem>
          <TaskItem><svg width="36" height="36" viewBox="0 0 36 36"><path d="M6 11L20 2.500 35 12v18a3 3 0 01-3 3H11a3 3 0 01-3-3z" fill="#1f9be6" /><path d="M20 2.500L35 12 15 25l-7-8z" fill="#0c6cc4" /><path d="M35 10v6L20 25l-4-6z" fill="#0a3f8f" /><path d="M15 32l20-16v14a3 3 0 01-3 3H17z" fill="#3fd6fb" /><path d="M6 11l14-8.500 6 4L14 14z" fill="#33b2f0" /><rect x="0" y="8.500" width="18" height="18.500" rx="2" fill="#1272d0" /><text x="9" y="23" fontFamily="Open Sans" fontWeight="700" fontSize="14" fill="#fff" textAnchor="middle">O</text></svg></TaskItem>
          <TaskItem on mark="active"><Edge /></TaskItem>
          <TaskItem mark="dot"><svg width="36" height="36" viewBox="0 0 36 36"><defs><linearGradient id="fo" x1="0" y1="0" x2="1" y2="1"><stop stopColor="#ffdc6b" /><stop offset="1" stopColor="#fdbd1f" /></linearGradient></defs><path d="M0 4a2 2 0 012-2h9l4 3.500V9H0z" fill="#dc9c08" /><path d="M0 8h11l4-3h21v30H0z" fill="url(#fo)" /><path d="M6 35v-7a4 4 0 014-4h16a4 4 0 014 4v7z" fill="#1273c4" /><path d="M11 29h14" stroke="#0b4f94" strokeWidth="1.500" /></svg></TaskItem>
          <TaskItem mark="line"><BadgeWrap><Chrome /><PhotoBadge /></BadgeWrap></TaskItem>
          <TaskItem mark="dot"><BadgeWrap><svg width="36" height="36" viewBox="0 0 36 36"><circle cx="19" cy="8" r="6" fill="#7b83eb" /><path d="M25 13h10v11a6 6 0 01-10 4z" fill="#5059c9" /><path d="M12 13h14v13c0 11-14 11-14 0z" fill="#7b83eb" /><rect x="0" y="9" width="18" height="18.500" rx="1.500" fill="#4347b0" /><text x="9" y="23.500" fontFamily="Open Sans" fontWeight="700" fontSize="14" fill="#fff" textAnchor="middle">T</text></svg><GreenBadge><S w={12} h={10} c="#fff" sw={2.4}><path d="M1.500 5L4.500 8l6-6.500" /></S></GreenBadge></BadgeWrap></TaskItem>
          <TaskItem mark="dot"><svg width="36" height="36" viewBox="0 0 36 36"><path d="M4 32h28v2a2 2 0 01-2 2H6a2 2 0 01-2-2z" fill="#b05412" /><path d="M4 29h28v3.500H4z" fill="#f4f4f4" /><rect x="4" y="2.500" width="28" height="28" rx="1.500" fill="#56c5e3" /><path d="M9 11h18M9 17h18M9 23h18" stroke="#0a5a80" strokeWidth="1.900" /><path d="M8.500 0v5M14.800 0v5M21.200 0v5M27.500 0v5" stroke="#1b6d8c" strokeWidth="2.600" /></svg></TaskItem>
          <TaskItem mark="dot"><svg width="36" height="36" viewBox="0 0 36 36"><path d="M26 0l10 4.500v27L26 36z" fill="#25a0f2" /><path d="M26 0v10L5 27l-3-1.500c-2-1.500-2-2.500 0-4z" fill="#0c7cc8" /><path d="M26 36V26L5 9l-3 1.500c-2 1.500-2 2.500 0 4z" fill="#0b86d6" /></svg></TaskItem>
          <TaskItem mark="line"><BadgeWrap><Chrome /><TBadge>T</TBadge></BadgeWrap></TaskItem>
        </Apps>
        <Tray>
          <S w={16} h={9} c="#1b1b1b" sw={1.8}><path d="M1 8l7-7 7 7" /></S>
          <CloudWrap><S w={26} h={20} c="#1b1b1b" sw={1.6}><path d="M6 17.500C0 17.500 0 9.500 6 9.500 8 1 17 1 19 8.500c6 0 6 9 0 9z" fill="#aeb3b1" /><path d="M6 1l17 18" /></S></CloudWrap>
          <Lang>ENG<br />IN</Lang>
          <TrayIcons>
            <S w={24} h={20} c="#1b1b1b" sw={1.7}><path d="M1 8c6-7 16-7 22 0M4.500 11.500c4-5 11-5 15 0M8 15c2.500-3 5.500-3 8 0" /><circle cx="12" cy="17.500" r="1.300" fill="#1b1b1b" /></S>
            <S w={24} h={20} c="#1b1b1b" sw={1.5}><path d="M1 7h4l5-4.500v15L5 13H1zM13 7.500c1.500 1.500 1.500 3.500 0 5" /><path d="M16 5c3 3 3 7 0 10M19 2.500c5 5 5 10 0 15" stroke="#a9b5af" /></S>
            <S w={24} h={20} c="#1b1b1b" sw={1.7}><path d="M8 3.500h10a3 3 0 013 3V14a3 3 0 01-3 3H4a3 3 0 01-3-3v-2" /><path d="M8 6.500h9.500V14H4v-2z" fill="#1b1b1b" strokeWidth="1" /><path d="M22.500 8v4.500" strokeWidth="2.500" /><path d="M5 0L1 6h3l-1 5 5-6.500H5.500L7 0z" fill="#1b1b1b" stroke="none" /></S>
          </TrayIcons>
          <Clock>09:14<br />20-07-2025</Clock>
        </Tray>
      </Taskbar>
    </Screen>
  );
}
